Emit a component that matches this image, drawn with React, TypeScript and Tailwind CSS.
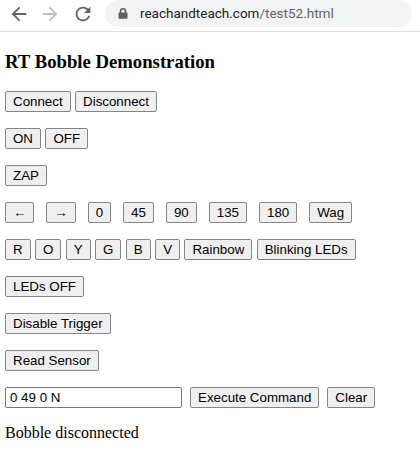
import React, { useState } from 'react';

const serif = { fontFamily: '"Liberation Serif", "Times New Roman", serif' };

const Btn = ({ children }: { children: React.ReactNode }) => (
  <button className="h-[21px] px-[7px] border border-[#858585] rounded-[2px] bg-[#efefef] text-black text-[13.33px] leading-[15px] whitespace-nowrap font-['Liberation_Sans',Arial,sans-serif] shrink-0">
    {children}
  </button>
);

const Row = ({ children, gap = 'gap-[4.4px]' }: { children: React.ReactNode; gap?: string }) => (
  <div className={`flex items-center h-[21px] mb-[16px] ${gap}`}>{children}</div>
);

const Toolbar = () => (
  <div className="h-[32px] border-b border-[#dadce0] bg-white">
    <div className="flex items-center h-[27px]">
      {/* back */}
      <svg className="ml-[8px] shrink-0" width="22" height="22" viewBox="0 0 24 24" fill="#5f6368">
        <path d="M20 11H7.83l5.59-5.59L12 4l-8 8 8 8 1.41-1.41L7.83 13H20v-2z" />
      </svg>
      {/* forward */}
      <svg className="ml-[9px] shrink-0" width="22" height="22" viewBox="0 0 24 24" fill="#bdc1c6">
        <path d="M12 4l-1.41 1.41L16.17 11H4v2h12.17l-5.58 5.59L12 20l8-8z" />
      </svg>
      {/* reload */}
      <svg className="ml-[11px] shrink-0" width="22" height="22" viewBox="0 0 24 24" fill="#5f6368">
        <path d="M17.65 6.35C16.2 4.9 14.21 4 12 4c-4.42 0-7.99 3.58-7.99 8s3.57 8 7.99 8c3.73 0 6.84-2.55 7.73-6h-2.08c-.82 2.33-3.04 4-5.65 4-3.31 0-6-2.690-6-6s2.69-6 6-6c1.66 0 3.14.69 4.22 1.780L13 11h7V4l-2.35 2.35z" />
      </svg>
      <div className="ml-[11px] mr-[8px] flex-1 h-[27px] rounded-full bg-[#f1f3f4] flex items-center pl-[13px]">
        <svg className="shrink-0" width="10" height="11" viewBox="0 0 10 11">
          <path d="M2.5 5V3.3a2.5 2.5 0 0 1 5 0V5" fill="none" stroke="#5f6368" strokeWidth="1.6" />
          <rect x="0.5" y="4.6" width="9" height="6.2" rx="0.8" fill="#5f6368" />
        </svg>
        <span className="ml-[12px] text-[13.5px] font-['Roboto',sans-serif] text-[#202124] whitespace-nowrap">
          reachandteach.com<span className="text-[#5f6368]">/test52.html</span>
        </span>
      </div>
    </div>
  </div>
);

export default function App() {
  const [cmd, setCmd] = useState('0 49 0 N');
  return (
    <div className="w-[420px] h-[456px] overflow-hidden bg-white text-black" style={serif}>
      <Toolbar />
      <div className="px-[5px]">
        <h3 className="mt-[19px] mb-[18px] text-[18.72px] leading-[21.5px] font-bold">RT Bobble Demonstration</h3>
        <Row>
          <Btn>Connect</Btn>
          <Btn>Disconnect</Btn>
        </Row>
        <Row>
          <Btn>ON</Btn>
          <Btn>OFF</Btn>
        </Row>
        <Row>
          <Btn>ZAP</Btn>
        </Row>
        <Row gap="gap-[12px]">
          <Btn>←</Btn>
          <Btn>→</Btn>
          <Btn>0</Btn>
          <Btn>45</Btn>
          <Btn>90</Btn>
          <Btn>135</Btn>
          <Btn>180</Btn>
          <Btn>Wag</Btn>
        </Row>
        <Row>
          <Btn>R</Btn>
          <Btn>O</Btn>
          <Btn>Y</Btn>
          <Btn>G</Btn>
          <Btn>B</Btn>
          <Btn>V</Btn>
          <Btn>Rainbow</Btn>
          <Btn>Blinking LEDs</Btn>
        </Row>
        <Row>
          <Btn>LEDs OFF</Btn>
        </Row>
        <Row>
          <Btn>Disable Trigger</Btn>
        </Row>
        <Row>
          <Btn>Read Sensor</Btn>
        </Row>
        <Row gap="gap-[8px]">
          <input
            value={cmd}
            onChange={e => setCmd(e.target.value)}
            className="w-[177px] h-[21px] pl-[4px] pr-[3px] border border-[#767676] rounded-[2px] text-[13.33px] font-['Liberation_Sans',Arial,sans-serif] text-black outline-none"
          />
          <Btn>Execute Command</Btn>
          <Btn>Clear</Btn>
        </Row>
        <div className="text-[16px] leading-[18px]">Bobble disconnected</div>
      </div>
    </div>
  );
}
